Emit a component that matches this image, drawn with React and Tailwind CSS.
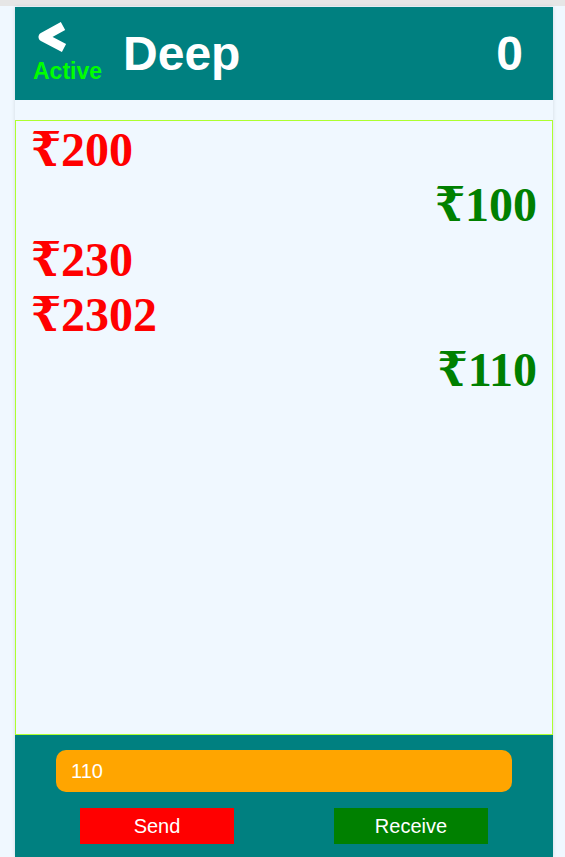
import { useState } from 'react';

const entries = [
    { amount: 200, type: 'send' },
    { amount: 100, type: 'receive' },
    { amount: 230, type: 'send' },
    { amount: 2302, type: 'send' },
    { amount: 110, type: 'receive' },
];

const App = () => {
    const [value, setValue] = useState('110');

    return (
        <div className="min-h-screen bg-[#f0f8ff]" style={{ fontFamily: '"Liberation Sans", Arial, sans-serif' }}>
            <div className="h-[6px] bg-[#e6e6e6]" />
            <div className="ml-[15px] mt-px w-[538px] shadow-[0_0_4px_rgba(0,0,0,0.12)]">
                {/* header */}
                <div className="h-[93px] bg-[#008080] flex items-start pl-[18px] pr-[30px]">
                    <div className="flex flex-col items-start pt-[13px]">
                        <svg width="34" height="34" viewBox="0 0 34 34" className="ml-[3px] blur-[0.7px]">
                            <polyline points="27,6 7,17 28,28" fill="none" stroke="#fff" strokeWidth="9" strokeLinejoin="round" />
                        </svg>
                        <span className="mt-[6px] text-[23px] font-bold leading-none text-[#00ff00]">Active</span>
                    </div>
                    <h1 className="ml-[21px] mt-[23px] text-[48px] font-bold leading-none text-white">Deep</h1>
                    <span className="ml-auto mt-[23px] text-[48px] font-bold leading-none text-white">0</span>
                </div>

                <div className="h-[20px]" />

                {/* transactions */}
                <div className="h-[615px] border border-[#adff2f] bg-[#f0f8ff] flex flex-col pt-px" style={{ fontFamily: '"Liberation Serif", "DejaVu Serif Condensed", "DejaVu Serif", serif' }}>
                    {entries.map((e, i) => (
                        <div
                            key={i}
                            className={e.type === 'send'
                                ? 'h-[55px] text-[48px] leading-[55px] font-bold text-[#ff0000] text-left pl-[15px]'
                                : 'h-[55px] text-[48px] leading-[55px] font-bold text-[#008000] text-right pr-[15px]'}
                        >
                            ₹{e.amount}
                        </div>
                    ))}
                </div>

                {/* footer */}
                <div className="h-[122px] bg-[#008080] pt-[15px]">
                    <input
                        value={value}
                        onChange={(ev) => setValue(ev.target.value)}
                        className="ml-[41px] w-[456px] h-[42px] rounded-[10px] bg-[#ffa500] text-white text-[20px] pl-[15px] outline-none"
                    />
                    <div className="flex mt-[16px] pl-[65px]">
                        <button className="w-[154px] h-[36px] bg-[#ff0000] text-white text-[20px]">Send</button>
                        <button className="ml-[100px] w-[154px] h-[36px] bg-[#008000] text-white text-[20px]">Receive</button>
                    </div>
                </div>
            </div>
        </div>
    );
};

export default App;
